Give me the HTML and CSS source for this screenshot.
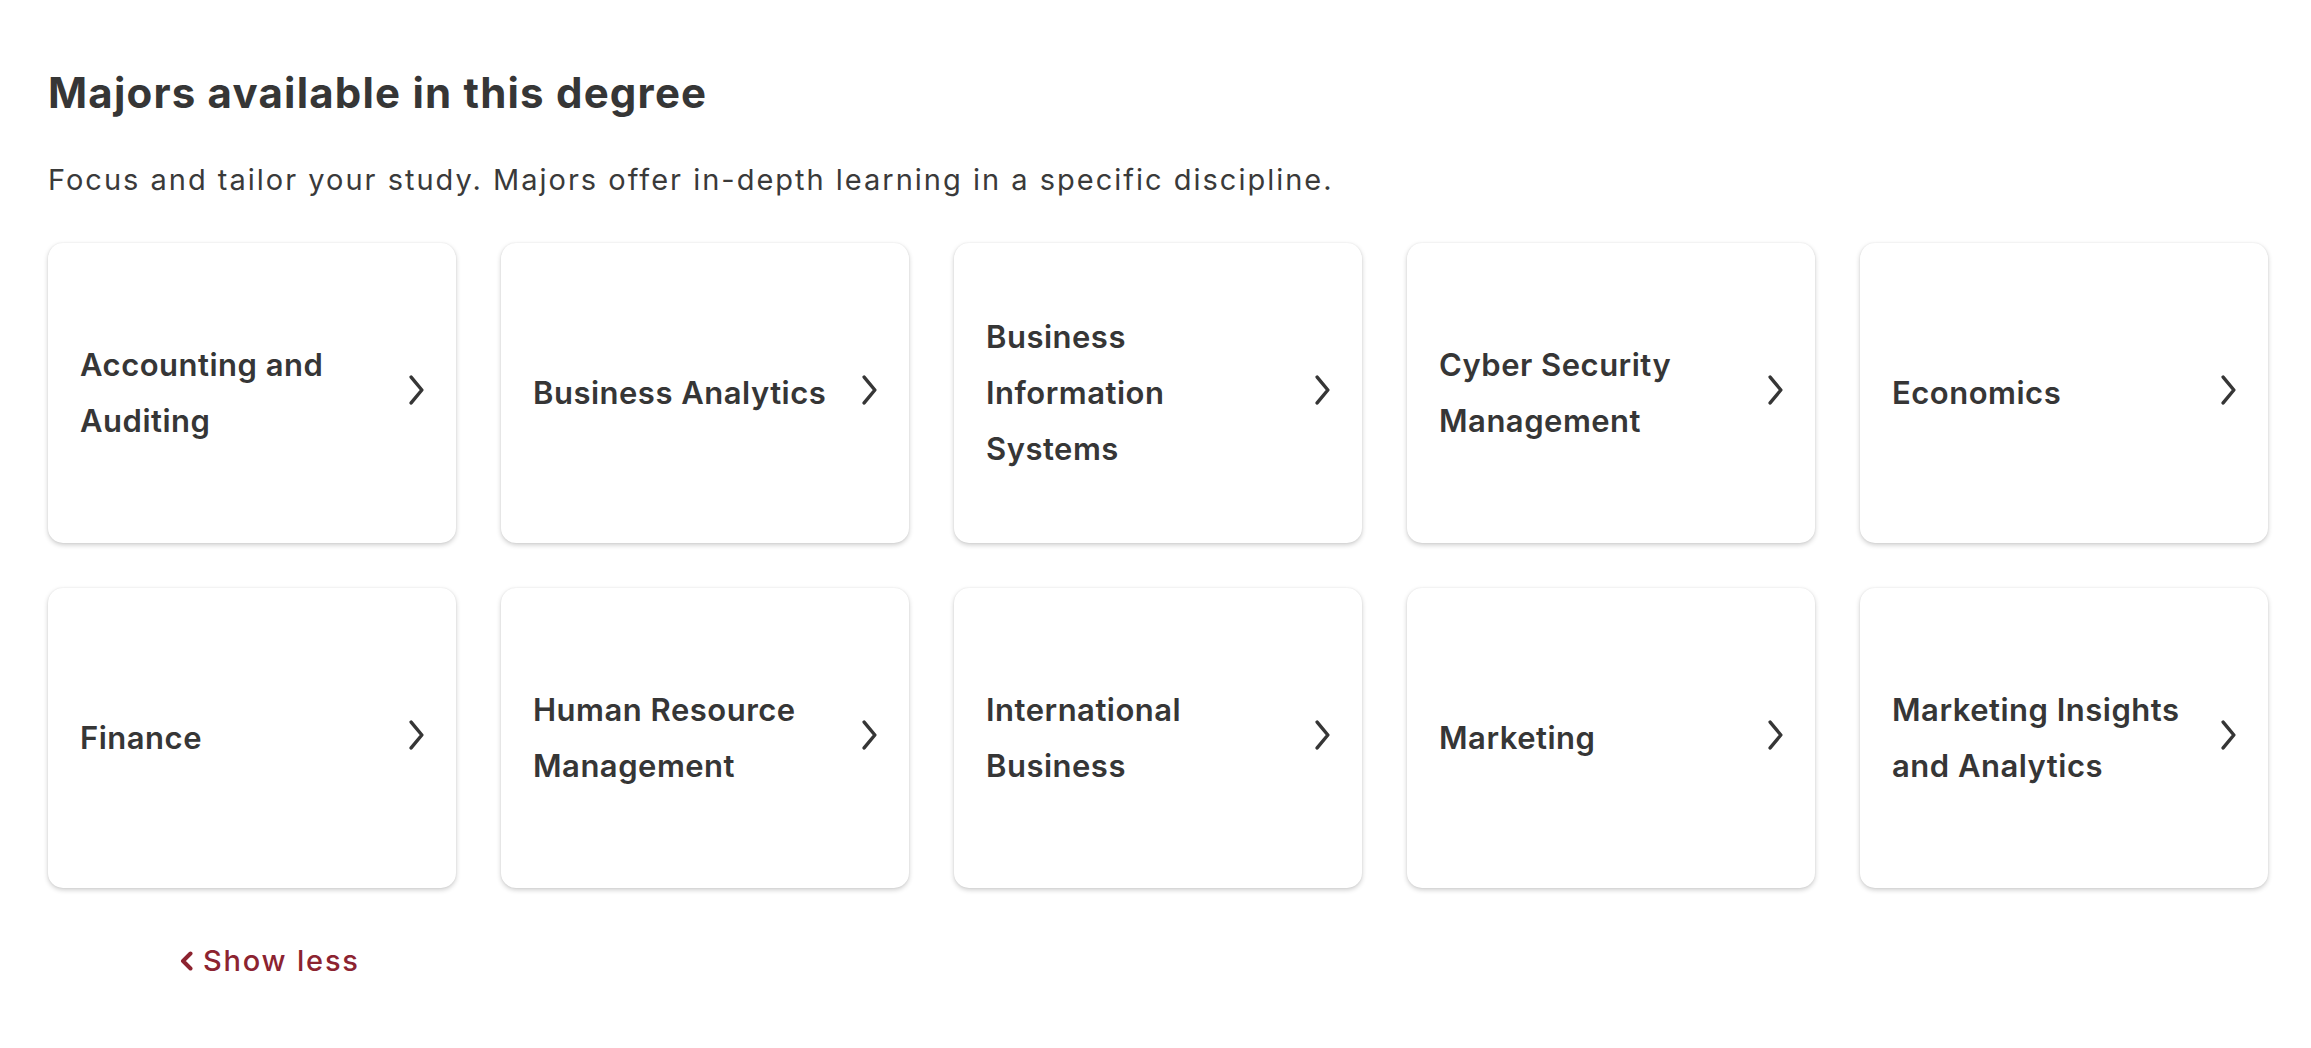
FILE: index.html
```html
<!DOCTYPE html>
<html lang="en">
<head>
<meta charset="utf-8">
<title>Majors available in this degree</title>
<link rel="stylesheet" href="styles.css">
</head>
<body>
<section class="majors">
  <h2 class="majors-title">Majors available in this degree</h2>
  <p class="majors-intro">Focus and tailor your study. Majors offer in-depth learning in a specific discipline.</p>
  <div class="majors-grid">
    <a class="major-card" href="#"><span class="major-name">Accounting and Auditing</span><svg class="chev" viewBox="0 0 14 28"><polyline points="2,2 12,14 2,26"/></svg></a>
    <a class="major-card" href="#"><span class="major-name">Business Analytics</span><svg class="chev" viewBox="0 0 14 28"><polyline points="2,2 12,14 2,26"/></svg></a>
    <a class="major-card" href="#"><span class="major-name">Business Information Systems</span><svg class="chev" viewBox="0 0 14 28"><polyline points="2,2 12,14 2,26"/></svg></a>
    <a class="major-card" href="#"><span class="major-name">Cyber Security Management</span><svg class="chev" viewBox="0 0 14 28"><polyline points="2,2 12,14 2,26"/></svg></a>
    <a class="major-card" href="#"><span class="major-name">Economics</span><svg class="chev" viewBox="0 0 14 28"><polyline points="2,2 12,14 2,26"/></svg></a>
    <a class="major-card" href="#"><span class="major-name">Finance</span><svg class="chev" viewBox="0 0 14 28"><polyline points="2,2 12,14 2,26"/></svg></a>
    <a class="major-card" href="#"><span class="major-name">Human Resource Management</span><svg class="chev" viewBox="0 0 14 28"><polyline points="2,2 12,14 2,26"/></svg></a>
    <a class="major-card" href="#"><span class="major-name">International Business</span><svg class="chev" viewBox="0 0 14 28"><polyline points="2,2 12,14 2,26"/></svg></a>
    <a class="major-card" href="#"><span class="major-name">Marketing</span><svg class="chev" viewBox="0 0 14 28"><polyline points="2,2 12,14 2,26"/></svg></a>
    <a class="major-card" href="#"><span class="major-name">Marketing Insights and Analytics</span><svg class="chev" viewBox="0 0 14 28"><polyline points="2,2 12,14 2,26"/></svg></a>
  </div>
  <button class="show-less" type="button"><svg class="show-less-icon" viewBox="0 0 13 20"><polyline points="10.5,2.5 3,10 10.5,17.5"/></svg><span>Show less</span></button>
</section>
</body>
</html>
```

FILE: styles.css
```css
html, body {
  margin: 0;
  padding: 0;
  background: #ffffff;
}

body {
  font-family: Inter, "Noto Sans", "Liberation Sans", sans-serif;
  color: #363636;
}

.majors {
  padding: 69px 43px 60px 48px;
}

.majors-title {
  margin: 0;
  font-size: 42px;
  line-height: 48px;
  font-weight: 700;
  letter-spacing: 1.2px;
  color: #363636;
}

.majors-intro {
  margin: 43px 0 0 0;
  font-size: 29px;
  line-height: 40px;
  font-weight: 400;
  letter-spacing: 2px;
  color: #3a3a3a;
}

.majors-grid {
  margin-top: 43px;
  display: grid;
  grid-template-columns: repeat(5, 408px);
  column-gap: 45px;
  row-gap: 45px;
}

.major-card {
  height: 300px;
  box-sizing: border-box;
  padding: 0 32px;
  display: flex;
  align-items: center;
  gap: 24px;
  background: #ffffff;
  border-radius: 15px;
  box-shadow: 0 2px 5px rgba(0, 0, 0, 0.2), 0 0 2px rgba(0, 0, 0, 0.07);
  text-decoration: none;
  color: #363636;
}

.major-name {
  flex: 1;
  font-size: 31px;
  line-height: 56px;
  font-weight: 600;
  letter-spacing: 0.5px;
}

.chev {
  flex: none;
  width: 15px;
  height: 30px;
  margin-top: -6px;
  fill: none;
  stroke: #363636;
  stroke-width: 3.2;
  stroke-linecap: round;
  stroke-linejoin: round;
}

.show-less {
  margin: 53px 0 0 132px;
  padding: 0;
  border: 0;
  background: none;
  display: flex;
  align-items: center;
  gap: 10px;
  font-family: inherit;
  font-size: 29px;
  line-height: 40px;
  font-weight: 500;
  letter-spacing: 1.8px;
  color: #8c2330;
  cursor: pointer;
}

.show-less-icon {
  width: 13px;
  height: 20px;
  fill: none;
  stroke: #8c2330;
  stroke-width: 4;
  stroke-linecap: round;
  stroke-linejoin: round;
}
```
